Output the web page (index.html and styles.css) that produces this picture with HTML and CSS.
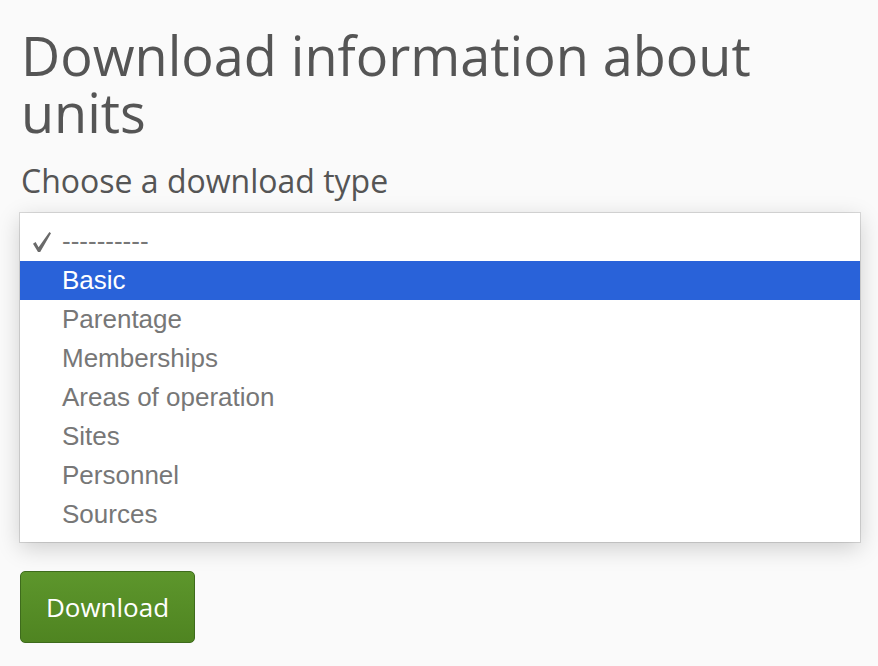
FILE: index.html
```html
<!DOCTYPE html>
<html>
<head>
<meta charset="utf-8">
<link rel="stylesheet" href="styles.css">
</head>
<body>
<main class="page">
  <h1 class="title">Download information about units</h1>
  <label class="label">Choose a download type</label>
  <ul class="menu">
    <li class="item checked"><svg class="check" width="18" height="20" viewBox="0 0 18 20"><polygon points="0,11.8 2.6,10 5.6,15.2 16.4,0 18,1.2 7.2,20 5,20" fill="#6a6a6a"/></svg>----------</li>
    <li class="item active">Basic</li>
    <li class="item">Parentage</li>
    <li class="item">Memberships</li>
    <li class="item">Areas of operation</li>
    <li class="item">Sites</li>
    <li class="item">Personnel</li>
    <li class="item">Sources</li>
  </ul>
  <button class="btn">Download</button>
</main>
</body>
</html>
```

FILE: styles.css
```css
html, body {
  margin: 0;
  padding: 0;
  background: #fafafa;
}
.page {
  padding: 27px 18px 0 20px;
  font-family: "Open Sans", sans-serif;
  color: #555;
}
.title {
  margin: 0 0 0 1px;
  font-size: 54px;
  line-height: 57px;
  font-weight: 400;
  width: 780px;
}
.label {
  display: block;
  margin: 20px 0 0 1px;
  font-size: 32px;
  line-height: 40px;
}
.menu {
  list-style: none;
  margin: 12px 0 0 0;
  padding: 9px 0 8px;
  width: 840px;
  background: #fff;
  box-shadow: 0 0 0 1px rgba(0,0,0,0.12), 0 6px 22px rgba(0,0,0,0.18);
  font-family: "Liberation Sans", Arial, sans-serif;
  font-size: 26px;
  color: #777;
}
.item {
  position: relative;
  height: 39px;
  line-height: 39px;
  padding-left: 42px;
}
.check {
  position: absolute;
  left: 13px;
  top: 10px;
}
.active {
  background: #2962d9;
  color: #fff;
}
.btn {
  display: block;
  margin-top: 29px;
  width: 175px;
  height: 72px;
  border: 1px solid #3e6b1c;
  border-radius: 5px;
  background: linear-gradient(#5d962c, #4f8421);
  color: #fff;
  font-family: "Open Sans", sans-serif;
  font-size: 26px;
  padding: 0;
}
```
